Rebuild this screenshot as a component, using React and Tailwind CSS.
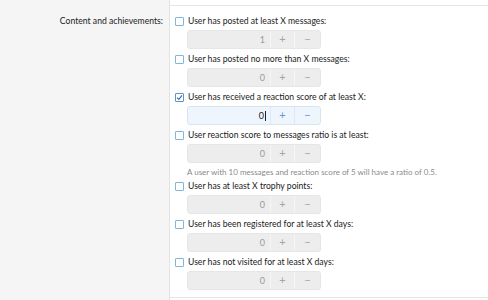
import React from "react";

const rows = [
  { label: "User has posted at least X messages:", value: "1" },
  { label: "User has posted no more than X messages:", value: "0" },
  { label: "User has received a reaction score of at least X:", value: "0", active: true },
  {
    label: "User reaction score to messages ratio is at least:",
    value: "0",
    help: "A user with 10 messages and reaction score of 5 will have a ratio of 0.5.",
  },
  { label: "User has at least X trophy points:", value: "0" },
  { label: "User has been registered for at least X days:", value: "0" },
  { label: "User has not visited for at least X days:", value: "0" },
];

function Checkbox({ checked }) {
  return (
    <span
      className={
        "flex h-[9px] w-[9px] shrink-0 items-center justify-center rounded-[1px] border bg-white " +
        (checked ? "border-[#5b93c6]" : "border-[#7fb6dc]")
      }
    >
      {checked && (
        <svg width="7" height="7" viewBox="0 0 7 7">
          <path d="M1 3.6 L2.8 5.4 L6 1.4" fill="none" stroke="#2f6fae" strokeWidth="1.1" />
        </svg>
      )}
    </span>
  );
}

function Spin({ value, active }) {
  if (active) {
    return (
      <div className="flex h-[19px] w-[134px] overflow-hidden rounded-[3px] border border-[#d7e5f3] bg-[#eef5fc]">
        <div className="flex flex-1 items-center justify-end pr-[4px] text-[9px] text-[#222]">
          <span>0</span>
          <span className="ml-[1px] h-[10px] w-[1px] bg-[#222]" />
        </div>
        <div className="flex w-[24px] items-center justify-center border-l border-[#dde8f4] text-[11px] text-[#5d9ad3]">+</div>
        <div className="flex w-[26px] items-center justify-center border-l border-[#dde8f4] text-[11px] text-[#5d9ad3]">−</div>
      </div>
    );
  }
  return (
    <div className="flex h-[19px] w-[134px] overflow-hidden rounded-[3px] border border-[#e6e6e6] bg-[#ededed]">
      <div className="flex flex-1 items-center justify-end pr-[5px] text-[9px] text-[#9a9a9a]">{value}</div>
      <div className="flex w-[24px] items-center justify-center border-l border-[#f6f6f6] text-[11px] text-[#a5a5a5]">+</div>
      <div className="flex w-[26px] items-center justify-center border-l border-[#f6f6f6] text-[11px] text-[#a5a5a5]">−</div>
    </div>
  );
}

export default function App() {
  return (
    <div
      className="flex h-[300px] w-[488px] overflow-hidden bg-white"
      style={{ fontFamily: "Lato, 'Open Sans', sans-serif" }}
    >
      <div className="w-[170px] shrink-0 border-r border-[#e3e3e3] bg-[#f5f5f5] pr-[6px] pt-[14px] text-right text-[8.65px] leading-[14px] text-[#222]">
        Content and achievements:
      </div>
      <div className="flex flex-1 flex-col">
        <div className="h-[6px] border-b border-[#e6e6e6]" />
        <div className="flex h-[292px] flex-col border-b border-[#e6e6e6] pl-[5px] pt-[8px]">
          {rows.map((r, i) => (
            <div key={i} className={r.help ? "mb-[1px]" : "mb-[3px]"}>
              <div className="flex h-[14px] items-center gap-[4px] text-[8.65px] text-[#1a1a1a]">
                <Checkbox checked={r.active} />
                <span>{r.label}</span>
              </div>
              <div className="mt-[2px] pl-[12px]">
                <Spin value={r.value} active={r.active} />
              </div>
              {r.help && (
                <div className="mt-[3px] pl-[12px] text-[8px] leading-[12px] text-[#8a8a8a]">{r.help}</div>
              )}
            </div>
          ))}
        </div>
      </div>
    </div>
  );
}
